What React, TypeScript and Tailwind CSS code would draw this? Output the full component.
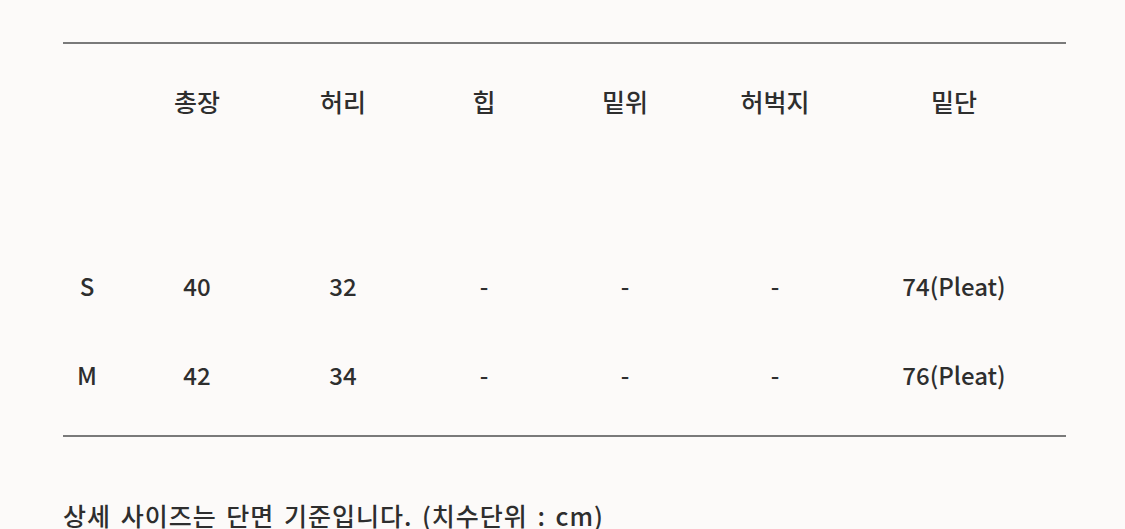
const cols = ["", "총장", "허리", "힙", "밑위", "허벅지", "밑단"];

const rows = [
  ["S", "40", "32", "-", "-", "-", "74(Pleat)"],
  ["M", "42", "34", "-", "-", "-", "76(Pleat)"],
];

const grid =
  "grid grid-cols-[48px_172px_120px_162px_120px_180px_178px] items-center text-center";

export default function App() {
  return (
    <div
      className="h-[529px] w-[1125px] overflow-hidden bg-[#fcfaf9] text-[#2e2e2e]"
      style={{ fontFamily: '"Noto Sans CJK KR", "Noto Sans", sans-serif' }}
    >
      <div className="pt-[42px] pl-[63px] w-[1066px]">
        {/* 표 */}
        <div className="border-t-2 border-b-2 border-[#7a7a7a] pb-[16px]">
          <div className={`${grid} h-[115px] text-[25px] font-medium`}>
            {cols.map((c, i) => (
              <div key={i}>{c}</div>
            ))}
          </div>
          <div className="h-[82px]" />
          {rows.map((r) => (
            <div key={r[0]} className={`${grid} h-[89px] text-[24px] font-medium`}>
              {r.map((v, i) => (
                <div key={i}>{v}</div>
              ))}
            </div>
          ))}
        </div>

        {/* 안내 */}
        <p className="mt-[60px] text-[25px] font-medium whitespace-nowrap tracking-[1px] [word-spacing:3px]">
          상세 사이즈는 단면 기준입니다. (치수단위 : cm)
        </p>
      </div>
    </div>
  );
}
